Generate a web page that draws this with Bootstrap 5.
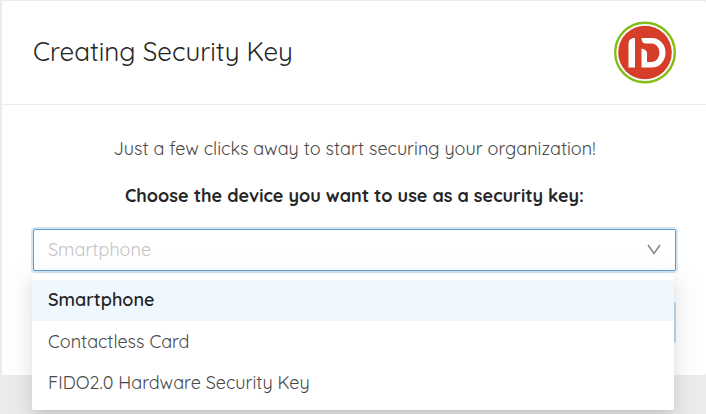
<!DOCTYPE html>
<html lang="en">
<head>
<meta charset="utf-8">
<meta name="viewport" content="width=device-width, initial-scale=1">
<title>Creating Security Key</title>
<link href="https://cdn.jsdelivr.net/npm/bootstrap@5.3.0/dist/css/bootstrap.min.css" rel="stylesheet">
<style>
body{background:#ececec;color:#262626;font-family:Quicksand,Lato,"Open Sans",sans-serif;font-size:18px;line-height:24px}
.page{padding:1px 0 0 2px}
.key-panel{border-radius:2px}
.key-head{padding:20px 30px 20px 31px;border-bottom:1px solid #ededed}
.key-title{font-size:26px;line-height:32px;font-weight:400;padding-bottom:2px}
.key-body{padding:32px 30px 32px 31px}
.intro{font-weight:400;color:#484848;margin-bottom:23px}
.prompt{font-weight:700;margin-bottom:21px}
.device-select{appearance:none;height:42px;padding:0 14px;border:1px solid #5a9fd4;border-radius:2px;background:#fff;color:#c4c4c4;font-weight:400;outline:0;box-shadow:0 0 0 2px #d7e6f3}
.chevron{right:14px;top:15px}
.device-menu{top:45px;left:-1px;right:2px;border-radius:2px;padding:6px 0 7px;box-shadow:0 3px 6px -4px rgba(0,0,0,.12),0 6px 16px rgba(0,0,0,.08),0 9px 28px 8px rgba(0,0,0,.05);z-index:5}
.device-option{height:41px;padding:0 16px;font-weight:400;color:#484848;background:#fff}
.device-option.chosen{background:#f0f8ff;color:#262626;font-weight:600;padding-bottom:2px}
.next-btn{height:41px;margin-top:31px;border:0;border-radius:2px;background:#bfdcf2}
</style>
<script src="https://cdn.jsdelivr.net/npm/bootstrap@5.3.0/dist/js/bootstrap.bundle.min.js"></script>
</head>
<body>
<main class="page min-vh-100">
  <section class="key-panel bg-white">
    <header class="key-head d-flex align-items-center justify-content-between">
      <h1 class="key-title mb-0">Creating Security Key</h1>
      <svg width="63" height="63" viewBox="0 0 63 63" role="img" aria-label="ID logo">
        <circle cx="32" cy="31.500" r="29.800" fill="#fff" stroke="#84bd16" stroke-width="2.400"/>
        <circle cx="32" cy="31.500" r="26.800" fill="#d63e2a"/>
        <path d="M15.500 22.500q0-5.500 6.500-5.500v29.500h-6.500z" fill="#fff"/>
        <path d="M28.500 17H39a13.500 14.750 0 0 1 0 29.500H28.500V27.500q5.500 1 5.500 4.500v9h5a7.500 9.200 0 0 0 0-18.400H33q-4.500 0-4.500-5.600z" fill="#fff"/>
      </svg>
    </header>
    <div class="key-body">
      <p class="intro text-center">Just a few clicks away to start securing your organization!</p>
      <label class="prompt d-block text-center" for="device">Choose the device you want to use as a security key:</label>
      <div class="position-relative">
        <select id="device" class="device-select d-block w-100">
          <option>Smartphone</option>
          <option>Contactless Card</option>
          <option>FIDO2.0 Hardware Security Key</option>
        </select>
        <svg class="chevron position-absolute pe-none" width="16" height="12" viewBox="0 0 16 12" aria-hidden="true"><path d="M2 1l6 8.500L14 1" fill="none" stroke="#858585" stroke-width="1.500"/></svg>
        <div class="device-menu position-absolute bg-white" role="listbox" aria-label="Devices">
          <button type="button" role="option" aria-selected="true" class="device-option chosen d-block w-100 border-0 text-start">Smartphone</button>
          <button type="button" role="option" aria-selected="false" class="device-option d-block w-100 border-0 text-start">Contactless Card</button>
          <button type="button" role="option" aria-selected="false" class="device-option d-block w-100 border-0 text-start">FIDO2.0 Hardware Security Key</button>
        </div>
      </div>
      <button type="button" class="next-btn d-block w-100" aria-label="Next"></button>
    </div>
  </section>
</main>
</body>
</html>
